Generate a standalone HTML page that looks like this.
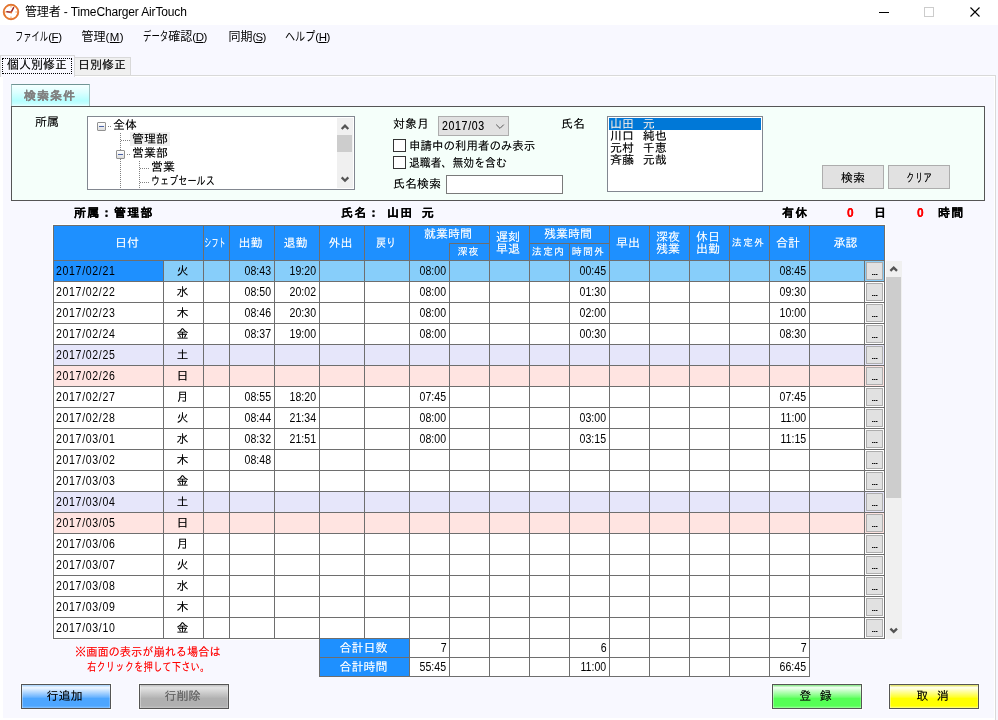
<!DOCTYPE html>
<html lang="ja">
<head>
<meta charset="utf-8">
<title>管理者 - TimeCharger AirTouch</title>
<style>
*{box-sizing:border-box;margin:0;padding:0}
html,body{width:998px;height:720px;overflow:hidden;background:#fff}
body{position:relative;font-family:"Liberation Sans","IPAGothic",sans-serif;font-size:12px;color:#000;line-height:12px}
.abs,#win div,#win span.abs,#win svg{position:absolute}
#win{position:absolute;left:0;top:0;width:998px;height:720px;overflow:hidden;will-change:transform}
.ui{font-family:"Liberation Sans","Noto Sans CJK JP",sans-serif;text-shadow:none}
#titlebar{left:0;top:0;width:998px;height:25px;background:#fff}
#title{left:25px;top:3px;height:18px;line-height:18px;font-size:12px;white-space:nowrap;letter-spacing:-0.15px}
#client{left:0;top:25px;width:998px;height:695px;background:#f8f8ff}
.mi{top:29px;height:16px;line-height:16px;font-size:12px;white-space:nowrap}
.mi u{text-decoration:underline}
/* tabs */
#tabpage{left:-1px;top:75px;width:997px;height:646px;border:1px solid #d9d9d9;background:#fff}
#tabin{left:3px;top:77px;width:991px;height:641px;background:#f8f8ff}
#tab1{left:0;top:55px;width:75px;height:22px;background:#f8f8ff;border:1px solid #d9d9d9;border-bottom:none}
#tab1f{left:2px;top:58px;width:70px;height:16px;border:1px dotted #000}
#tab2{left:74px;top:57px;width:57px;height:18px;background:#f0f0f0;border:1px solid #d9d9d9;border-bottom:none}
.tt{top:59px;height:12px;line-height:12px;font-size:12px;white-space:nowrap}
/* search group */
#gtab{left:11px;top:84px;width:79px;height:22px;border:1px solid #9fc0c0;border-top-color:#6f9494;border-bottom:none;background:linear-gradient(to bottom,#f6ffff 0%,#dcffff 35%,#b4ffff 75%,#c4ffff 88%,#eaffff 100%)}
#gtabt{left:24px;top:90px;width:60px;height:12px;line-height:12px;font-size:12px;letter-spacing:1px;font-weight:bold;color:#808080;white-space:nowrap}
#gpanel{left:11px;top:106px;width:974px;height:95px;background:#f5fffa;border:1px solid #555}
.lb{height:12px;line-height:12px;white-space:nowrap;font-size:12px}
#tree{left:87px;top:116px;width:268px;height:74px;background:#fff;border:1px solid #828790;overflow:hidden}
#list{left:607px;top:116px;width:156px;height:76px;background:#fff;border:1px solid #828790;overflow:hidden}
.btn{background:#e1e1e1;border:1px solid #adadad;text-align:center;font-size:12px}
.cb{width:13px;height:13px;background:#fff;border:1px solid #333}
/* grid */
#gridw{left:52px;top:224px;width:834px;height:416px;background:#fff}
#grid{left:53px;top:225px;width:832px;height:414px;background:#6e6e6e;overflow:hidden}
.hc{background:#1e90ff;color:#fff;border-left:1px solid #6e6e6e;border-top:1px solid #6e6e6e;display:flex;align-items:center;justify-content:center;text-align:center;font-size:12px;line-height:12px;white-space:nowrap;padding-right:3px}
.hc>span{display:block}
.hc.grp{}
.ht{color:#fff;text-align:center;line-height:17px;font-size:12px;white-space:nowrap;padding-right:3px}
.hc.sub{font-size:10px;letter-spacing:1.1px;padding-right:2px}
.hc.sub3{font-size:10px;letter-spacing:1.1px;padding-right:2px}
.hc.kana{padding-right:3px}
.hc.two{line-height:12px}
.r{left:0;width:832px;height:21px}
.c{top:0;height:21px;border-left:1px solid #6e6e6e;border-top:1px solid #6e6e6e;background-color:#fff;background-clip:padding-box;line-height:20px;font-size:12px;white-space:nowrap}
.c.d{padding-left:2.2px}
.c.w{text-align:center;padding-right:2px}
.c.t{text-align:right;padding-right:2.6px}
.c.b i{position:absolute;left:1px;top:1px;width:17px;height:18px;background:#e1e1e1;border:1px solid #adadad;font-style:normal;font-size:7.2px;font-weight:bold;line-height:19.5px;text-align:center;letter-spacing:0;padding-left:0.6px;text-shadow:0 0 0 #000}
.r.sel .c{background-color:#87cefa}
.r.sel .c.d{background-color:#1e90ff}
.r.sat .c{background-color:#e6e6fa}
.r.sun .c{background-color:#ffe4e1}
/* totals */
#tot{left:319px;top:638px;width:491px;height:39px;background:#6e6e6e}
.tl{background:#1e90ff;color:#fff;text-align:center;padding-right:2px;line-height:18px;border-left:1px solid #6e6e6e;border-top:1px solid #6e6e6e;font-size:12px}
.tc{background:#fff;border-left:1px solid #6e6e6e;border-top:1px solid #6e6e6e;text-align:right;padding-right:2.6px;line-height:18px;font-size:12px}
/* scrollbars */
.sbt{background:#f0f0f0}
.sbth{background:#cdcdcd}
/* bottom buttons */
.gb{top:684px;width:90px;height:25px;border:1px solid #555;box-shadow:inset 1px 0 0 0 rgba(255,255,255,.35),inset -1px 0 0 0 rgba(255,255,255,.2),0 0 0 1px rgba(255,255,255,.85);text-align:center;line-height:22px;font-size:12px;white-space:nowrap}
.red{color:#f00}
.b{font-weight:bold;letter-spacing:1.3px}
.sl{display:inline-block;transform:scaleX(1.6);margin:0 2px}
.n{display:inline-block;transform:scaleX(.88);transform-origin:100% 50%}
.nl{display:inline-block;transform:scaleX(.88);transform-origin:0 50%;letter-spacing:.75px}
#win span.n,#win span.nl,#win span.sl{position:static}
.k{display:inline-block;transform-origin:0 50%;position:static}
#win span.k{position:static}
.tsel{background:#f0f0f0}
.vd{width:1px;background-image:linear-gradient(to bottom,#808080 50%,transparent 50%);background-size:1px 2px}
.hd{height:1px;background-image:linear-gradient(to right,#808080 50%,transparent 50%);background-size:2px 1px}
.pm{width:9px;height:9px;border:1px solid #919191;background:linear-gradient(#fff,#ddd);border-radius:1px}
.pm:after{content:"";position:absolute;left:1px;top:3px;width:5px;height:1px;background:#4b63a7}
#win span.lt,#win span.bt,#win span.sp{position:static}
.lt{font-size:11.5px;letter-spacing:-0.4px}
.bt{display:inline-block;margin-right:3px}
.lb,.tt,.c.w,.btn,.gb{text-shadow:0 0 0 rgba(0,0,0,.4)}
.hc,.ht,.tl{text-shadow:0 0 0 rgba(255,255,255,.4)}
.lb.red{text-shadow:0 0 0 rgba(255,0,0,.4)}
.lb.b{text-shadow:0 0 0 #000}
.lb.b.red{text-shadow:0 0 0 #f00}
#gtabt{text-shadow:0 0 0 #808080}
.sx{transform-origin:0 50%}
.hc>span.sc{display:inline-block}
.nm{word-spacing:5.5px;white-space:pre}
.ws{word-spacing:5.2px;white-space:pre}

</style>
</head>
<body>
<div id="win">
<div id="titlebar">
<svg style="left:2px;top:3px" width="18" height="18" viewBox="0 0 18 18"><circle cx="9" cy="9" r="7.1" fill="#fff" stroke="#ea7a30" stroke-width="1.7"/><circle cx="9" cy="9" r="7.8" fill="none" stroke="#cf5a17" stroke-width="0.5"/><path d="M9 3v1.6M9 13.4V15M3 9h1.6M13.4 9H15" stroke="#f2a768" stroke-width="1.1"/><path d="M9.1 9.3L11.6 4.7" stroke="#9c2626" stroke-width="1.5" fill="none" stroke-linecap="round"/><path d="M9.1 9.3L4.9 8.7" stroke="#9c2626" stroke-width="1.5" fill="none" stroke-linecap="round"/><circle cx="9.1" cy="9.4" r="1" fill="#e8742c"/></svg>
<div id="title" class="ui">管理者 - TimeCharger AirTouch</div>
<svg style="left:876px;top:0" width="122" height="25" viewBox="0 0 122 25"><path d="M3 12.5H13" stroke="#000" stroke-width="1"/><rect x="48.5" y="7.5" width="9" height="9" fill="none" stroke="#ccc" stroke-width="1"/><path d="M94.5 7.5L103.5 16.5M103.5 7.5L94.5 16.5" stroke="#000" stroke-width="1.1"/></svg>
</div>
<div id="client"></div>
<div class="mi ui" style="left:15px"><span class="k" style="transform:scaleX(0.69);margin-right:-1.240em">ファイル</span><span class="lt">(<u>F</u>)</span></div>
<div class="mi ui" style="left:81.5px">管理<span class="lt" style="letter-spacing:0.4px">(<u>M</u>)</span></div>
<div class="mi ui" style="left:143px"><span class="k" style="transform:scaleX(0.7);margin-right:-0.900em">データ</span>確認<span class="lt">(<u>D</u>)</span></div>
<div class="mi ui" style="left:228.5px">同期<span class="lt" style="letter-spacing:-0.8px">(<u>S</u>)</span></div>
<div class="mi ui" style="left:285px"><span class="k" style="transform:scaleX(0.84);margin-right:-0.480em">ヘルプ</span><span class="lt">(<u>H</u>)</span></div>
<div id="tabpage"></div>
<div id="tabin"></div>
<div id="tab2"></div>
<div id="tab1"></div>
<div id="tab1f"></div>
<div class="tt" style="left:7px">個人別修正</div>
<div class="tt" style="left:78px">日別修正</div>
<div id="gtab"></div>
<div id="gtabt">検索条件</div>
<div id="gpanel"></div>
<div class="lb" style="left:35px;top:116px">所属</div>
<div id="tree">
<div class="tsel" style="left:42px;top:15px;width:40px;height:14px"></div>
<div class="vd" style="left:32px;top:16px;height:56px"></div>
<div class="vd" style="left:51px;top:44px;height:28px"></div>
<div class="hd" style="left:20px;top:9px;width:4px"></div>
<div class="hd" style="left:33px;top:23px;width:9px"></div>
<div class="hd" style="left:39px;top:37px;width:4px"></div>
<div class="hd" style="left:52px;top:51px;width:9px"></div>
<div class="hd" style="left:52px;top:65px;width:9px"></div>
<div class="pm" style="left:9px;top:5px"></div>
<div class="pm" style="left:28px;top:33px"></div>
<div class="lb" style="left:25px;top:2px">全体</div>
<div class="lb" style="left:44px;top:16px">管理部</div>
<div class="lb" style="left:44px;top:30px">営業部</div>
<div class="lb" style="left:63px;top:44px">営業</div>
<div class="lb sx" style="left:63px;top:58px;transform:scaleX(.76)">ウェブセールス</div>
<div class="sbt" style="left:249px;top:1px;width:16px;height:70px"></div>
<div class="sbth" style="left:249px;top:18px;width:15px;height:17px"></div>
<svg style="left:249px;top:1px" width="16" height="17" viewBox="0 0 16 17"><path d="M4.7 11L8 7.7L11.3 11" fill="none" stroke="#545454" stroke-width="2.3"/></svg>
<svg style="left:249px;top:54px" width="16" height="17" viewBox="0 0 16 17"><path d="M4.7 6.4L8 9.7L11.3 6.4" fill="none" stroke="#545454" stroke-width="2.3"/></svg>
</div>
<div class="lb" style="left:393px;top:118px">対象月</div>
<div class="btn" style="left:438px;top:116px;width:71px;height:20px"></div>
<div class="lb sx" style="left:442.3px;top:120px;transform:scaleX(.88);letter-spacing:.75px">2017/03</div>
<svg style="left:494px;top:122px" width="12" height="8" viewBox="0 0 12 8"><path d="M2.2 2.6L6 6.4L9.8 2.6" fill="none" stroke="#555" stroke-width="1"/></svg>
<div class="cb" style="left:393px;top:139px"></div>
<div class="lb sx" style="left:409px;top:140px;transform:scaleX(.957)">申請中の利用者のみ表示</div>
<div class="cb" style="left:393px;top:156px"></div>
<div class="lb sx" style="left:409px;top:157px;transform:scaleX(.905)">退職者、無効を含む</div>
<div class="lb" style="left:393px;top:178px">氏名検索</div>
<div style="left:446px;top:175px;width:117px;height:19px;background:#fff;border:1px solid #7a7a7a"></div>
<div class="lb" style="left:561px;top:118px">氏名</div>
<div id="list">
<div style="left:1px;top:1px;width:152px;height:12px;background:#0078d7"></div>
<div class="lb nm" style="left:2px;top:1px;color:#fff">山田 元</div>
<div class="lb nm" style="left:2px;top:13px">川口 純也</div>
<div class="lb nm" style="left:2px;top:25px">元村 千恵</div>
<div class="lb nm" style="left:2px;top:37px">斉藤 元哉</div>
</div>
<div class="btn" style="left:822px;top:165px;width:62px;height:24px;line-height:24px">検索</div>
<div class="btn" style="left:888px;top:165px;width:62px;height:24px;line-height:24px"><span class="k" style="transform:scaleX(0.72);margin-right:-0.840em">クリア</span></div>
<div class="lb b" style="left:74px;top:207px">所属：管理部</div>
<div class="lb b" style="left:341px;top:207px">氏名：</div>
<div class="lb b" style="left:387px;top:207px;word-spacing:3.6px">山田 元</div>
<div class="lb b" style="left:782px;top:207px">有休</div>
<div class="lb b red" style="left:847px;top:207px">0</div>
<div class="lb b" style="left:874px;top:207px">日</div>
<div class="lb b red" style="left:917px;top:207px">0</div>
<div class="lb b" style="left:938px;top:207px">時間</div>
<div id="gridw"></div>
<div id="grid">
<div class="hc " style="left:0px;top:0px;width:150px;height:35px"><span>日付</span></div>
<div class="hc kana" style="left:150px;top:0px;width:26px;height:35px"><span style="transform:scaleX(0.6)">シフト</span></div>
<div class="hc " style="left:176px;top:0px;width:45px;height:35px"><span>出勤</span></div>
<div class="hc " style="left:221px;top:0px;width:45px;height:35px"><span>退勤</span></div>
<div class="hc " style="left:266px;top:0px;width:45px;height:35px"><span>外出</span></div>
<div class="hc " style="left:311px;top:0px;width:45px;height:35px"><span style="transform:scaleX(0.84)">戻り</span></div>
<div class="hc grp" style="left:356px;top:0px;width:80px;height:35px"><span></span></div>
<div class="ht" style="left:356px;top:1px;width:81px;height:17px">就業時間</div>
<div class="hc sub" style="left:396px;top:18px;width:40px;height:17px"><span>深夜</span></div>
<div class="hc two" style="left:436px;top:0px;width:40px;height:35px"><span>遅刻<br>早退</span></div>
<div class="hc grp" style="left:476px;top:0px;width:80px;height:35px"><span></span></div>
<div class="ht" style="left:476px;top:1px;width:81px;height:17px">残業時間</div>
<div class="hc sub" style="left:476px;top:18px;width:40px;height:17px"><span>法定内</span></div>
<div class="hc sub" style="left:516px;top:18px;width:40px;height:17px"><span>時間外</span></div>
<div class="hc " style="left:556px;top:0px;width:40px;height:35px"><span>早出</span></div>
<div class="hc two" style="left:596px;top:0px;width:40px;height:35px"><span>深夜<br>残業</span></div>
<div class="hc two" style="left:636px;top:0px;width:40px;height:35px"><span>休日<br>出勤</span></div>
<div class="hc sub3" style="left:676px;top:0px;width:40px;height:35px"><span>法定外</span></div>
<div class="hc " style="left:716px;top:0px;width:40px;height:35px"><span>合計</span></div>
<div class="hc " style="left:756px;top:0px;width:75px;height:35px"><span>承認</span></div>
<div class="r sel" style="top:35px">
<div class="c d" style="left:0px;width:110px"><span class="nl">2017/02/21</span></div>
<div class="c w" style="left:110px;width:40px">火</div>
<div class="c t" style="left:150px;width:26px"></div>
<div class="c t" style="left:176px;width:45px"><span class="n">08:43</span></div>
<div class="c t" style="left:221px;width:45px"><span class="n">19:20</span></div>
<div class="c t" style="left:266px;width:45px"></div>
<div class="c t" style="left:311px;width:45px"></div>
<div class="c t" style="left:356px;width:40px"><span class="n">08:00</span></div>
<div class="c t" style="left:396px;width:40px"></div>
<div class="c t" style="left:436px;width:40px"></div>
<div class="c t" style="left:476px;width:40px"></div>
<div class="c t" style="left:516px;width:40px"><span class="n">00:45</span></div>
<div class="c t" style="left:556px;width:40px"></div>
<div class="c t" style="left:596px;width:40px"></div>
<div class="c t" style="left:636px;width:40px"></div>
<div class="c t" style="left:676px;width:40px"></div>
<div class="c t" style="left:716px;width:40px"><span class="n">08:45</span></div>
<div class="c t" style="left:756px;width:55px"></div>
<div class="c b" style="left:811px;width:20px"><i>...</i></div>
</div>
<div class="r " style="top:56px">
<div class="c d" style="left:0px;width:110px"><span class="nl">2017/02/22</span></div>
<div class="c w" style="left:110px;width:40px">水</div>
<div class="c t" style="left:150px;width:26px"></div>
<div class="c t" style="left:176px;width:45px"><span class="n">08:50</span></div>
<div class="c t" style="left:221px;width:45px"><span class="n">20:02</span></div>
<div class="c t" style="left:266px;width:45px"></div>
<div class="c t" style="left:311px;width:45px"></div>
<div class="c t" style="left:356px;width:40px"><span class="n">08:00</span></div>
<div class="c t" style="left:396px;width:40px"></div>
<div class="c t" style="left:436px;width:40px"></div>
<div class="c t" style="left:476px;width:40px"></div>
<div class="c t" style="left:516px;width:40px"><span class="n">01:30</span></div>
<div class="c t" style="left:556px;width:40px"></div>
<div class="c t" style="left:596px;width:40px"></div>
<div class="c t" style="left:636px;width:40px"></div>
<div class="c t" style="left:676px;width:40px"></div>
<div class="c t" style="left:716px;width:40px"><span class="n">09:30</span></div>
<div class="c t" style="left:756px;width:55px"></div>
<div class="c b" style="left:811px;width:20px"><i>...</i></div>
</div>
<div class="r " style="top:77px">
<div class="c d" style="left:0px;width:110px"><span class="nl">2017/02/23</span></div>
<div class="c w" style="left:110px;width:40px">木</div>
<div class="c t" style="left:150px;width:26px"></div>
<div class="c t" style="left:176px;width:45px"><span class="n">08:46</span></div>
<div class="c t" style="left:221px;width:45px"><span class="n">20:30</span></div>
<div class="c t" style="left:266px;width:45px"></div>
<div class="c t" style="left:311px;width:45px"></div>
<div class="c t" style="left:356px;width:40px"><span class="n">08:00</span></div>
<div class="c t" style="left:396px;width:40px"></div>
<div class="c t" style="left:436px;width:40px"></div>
<div class="c t" style="left:476px;width:40px"></div>
<div class="c t" style="left:516px;width:40px"><span class="n">02:00</span></div>
<div class="c t" style="left:556px;width:40px"></div>
<div class="c t" style="left:596px;width:40px"></div>
<div class="c t" style="left:636px;width:40px"></div>
<div class="c t" style="left:676px;width:40px"></div>
<div class="c t" style="left:716px;width:40px"><span class="n">10:00</span></div>
<div class="c t" style="left:756px;width:55px"></div>
<div class="c b" style="left:811px;width:20px"><i>...</i></div>
</div>
<div class="r " style="top:98px">
<div class="c d" style="left:0px;width:110px"><span class="nl">2017/02/24</span></div>
<div class="c w" style="left:110px;width:40px">金</div>
<div class="c t" style="left:150px;width:26px"></div>
<div class="c t" style="left:176px;width:45px"><span class="n">08:37</span></div>
<div class="c t" style="left:221px;width:45px"><span class="n">19:00</span></div>
<div class="c t" style="left:266px;width:45px"></div>
<div class="c t" style="left:311px;width:45px"></div>
<div class="c t" style="left:356px;width:40px"><span class="n">08:00</span></div>
<div class="c t" style="left:396px;width:40px"></div>
<div class="c t" style="left:436px;width:40px"></div>
<div class="c t" style="left:476px;width:40px"></div>
<div class="c t" style="left:516px;width:40px"><span class="n">00:30</span></div>
<div class="c t" style="left:556px;width:40px"></div>
<div class="c t" style="left:596px;width:40px"></div>
<div class="c t" style="left:636px;width:40px"></div>
<div class="c t" style="left:676px;width:40px"></div>
<div class="c t" style="left:716px;width:40px"><span class="n">08:30</span></div>
<div class="c t" style="left:756px;width:55px"></div>
<div class="c b" style="left:811px;width:20px"><i>...</i></div>
</div>
<div class="r sat" style="top:119px">
<div class="c d" style="left:0px;width:110px"><span class="nl">2017/02/25</span></div>
<div class="c w" style="left:110px;width:40px">土</div>
<div class="c t" style="left:150px;width:26px"></div>
<div class="c t" style="left:176px;width:45px"></div>
<div class="c t" style="left:221px;width:45px"></div>
<div class="c t" style="left:266px;width:45px"></div>
<div class="c t" style="left:311px;width:45px"></div>
<div class="c t" style="left:356px;width:40px"></div>
<div class="c t" style="left:396px;width:40px"></div>
<div class="c t" style="left:436px;width:40px"></div>
<div class="c t" style="left:476px;width:40px"></div>
<div class="c t" style="left:516px;width:40px"></div>
<div class="c t" style="left:556px;width:40px"></div>
<div class="c t" style="left:596px;width:40px"></div>
<div class="c t" style="left:636px;width:40px"></div>
<div class="c t" style="left:676px;width:40px"></div>
<div class="c t" style="left:716px;width:40px"></div>
<div class="c t" style="left:756px;width:55px"></div>
<div class="c b" style="left:811px;width:20px"><i>...</i></div>
</div>
<div class="r sun" style="top:140px">
<div class="c d" style="left:0px;width:110px"><span class="nl">2017/02/26</span></div>
<div class="c w" style="left:110px;width:40px">日</div>
<div class="c t" style="left:150px;width:26px"></div>
<div class="c t" style="left:176px;width:45px"></div>
<div class="c t" style="left:221px;width:45px"></div>
<div class="c t" style="left:266px;width:45px"></div>
<div class="c t" style="left:311px;width:45px"></div>
<div class="c t" style="left:356px;width:40px"></div>
<div class="c t" style="left:396px;width:40px"></div>
<div class="c t" style="left:436px;width:40px"></div>
<div class="c t" style="left:476px;width:40px"></div>
<div class="c t" style="left:516px;width:40px"></div>
<div class="c t" style="left:556px;width:40px"></div>
<div class="c t" style="left:596px;width:40px"></div>
<div class="c t" style="left:636px;width:40px"></div>
<div class="c t" style="left:676px;width:40px"></div>
<div class="c t" style="left:716px;width:40px"></div>
<div class="c t" style="left:756px;width:55px"></div>
<div class="c b" style="left:811px;width:20px"><i>...</i></div>
</div>
<div class="r " style="top:161px">
<div class="c d" style="left:0px;width:110px"><span class="nl">2017/02/27</span></div>
<div class="c w" style="left:110px;width:40px">月</div>
<div class="c t" style="left:150px;width:26px"></div>
<div class="c t" style="left:176px;width:45px"><span class="n">08:55</span></div>
<div class="c t" style="left:221px;width:45px"><span class="n">18:20</span></div>
<div class="c t" style="left:266px;width:45px"></div>
<div class="c t" style="left:311px;width:45px"></div>
<div class="c t" style="left:356px;width:40px"><span class="n">07:45</span></div>
<div class="c t" style="left:396px;width:40px"></div>
<div class="c t" style="left:436px;width:40px"></div>
<div class="c t" style="left:476px;width:40px"></div>
<div class="c t" style="left:516px;width:40px"></div>
<div class="c t" style="left:556px;width:40px"></div>
<div class="c t" style="left:596px;width:40px"></div>
<div class="c t" style="left:636px;width:40px"></div>
<div class="c t" style="left:676px;width:40px"></div>
<div class="c t" style="left:716px;width:40px"><span class="n">07:45</span></div>
<div class="c t" style="left:756px;width:55px"></div>
<div class="c b" style="left:811px;width:20px"><i>...</i></div>
</div>
<div class="r " style="top:182px">
<div class="c d" style="left:0px;width:110px"><span class="nl">2017/02/28</span></div>
<div class="c w" style="left:110px;width:40px">火</div>
<div class="c t" style="left:150px;width:26px"></div>
<div class="c t" style="left:176px;width:45px"><span class="n">08:44</span></div>
<div class="c t" style="left:221px;width:45px"><span class="n">21:34</span></div>
<div class="c t" style="left:266px;width:45px"></div>
<div class="c t" style="left:311px;width:45px"></div>
<div class="c t" style="left:356px;width:40px"><span class="n">08:00</span></div>
<div class="c t" style="left:396px;width:40px"></div>
<div class="c t" style="left:436px;width:40px"></div>
<div class="c t" style="left:476px;width:40px"></div>
<div class="c t" style="left:516px;width:40px"><span class="n">03:00</span></div>
<div class="c t" style="left:556px;width:40px"></div>
<div class="c t" style="left:596px;width:40px"></div>
<div class="c t" style="left:636px;width:40px"></div>
<div class="c t" style="left:676px;width:40px"></div>
<div class="c t" style="left:716px;width:40px"><span class="n">11:00</span></div>
<div class="c t" style="left:756px;width:55px"></div>
<div class="c b" style="left:811px;width:20px"><i>...</i></div>
</div>
<div class="r " style="top:203px">
<div class="c d" style="left:0px;width:110px"><span class="nl">2017/03/01</span></div>
<div class="c w" style="left:110px;width:40px">水</div>
<div class="c t" style="left:150px;width:26px"></div>
<div class="c t" style="left:176px;width:45px"><span class="n">08:32</span></div>
<div class="c t" style="left:221px;width:45px"><span class="n">21:51</span></div>
<div class="c t" style="left:266px;width:45px"></div>
<div class="c t" style="left:311px;width:45px"></div>
<div class="c t" style="left:356px;width:40px"><span class="n">08:00</span></div>
<div class="c t" style="left:396px;width:40px"></div>
<div class="c t" style="left:436px;width:40px"></div>
<div class="c t" style="left:476px;width:40px"></div>
<div class="c t" style="left:516px;width:40px"><span class="n">03:15</span></div>
<div class="c t" style="left:556px;width:40px"></div>
<div class="c t" style="left:596px;width:40px"></div>
<div class="c t" style="left:636px;width:40px"></div>
<div class="c t" style="left:676px;width:40px"></div>
<div class="c t" style="left:716px;width:40px"><span class="n">11:15</span></div>
<div class="c t" style="left:756px;width:55px"></div>
<div class="c b" style="left:811px;width:20px"><i>...</i></div>
</div>
<div class="r " style="top:224px">
<div class="c d" style="left:0px;width:110px"><span class="nl">2017/03/02</span></div>
<div class="c w" style="left:110px;width:40px">木</div>
<div class="c t" style="left:150px;width:26px"></div>
<div class="c t" style="left:176px;width:45px"><span class="n">08:48</span></div>
<div class="c t" style="left:221px;width:45px"></div>
<div class="c t" style="left:266px;width:45px"></div>
<div class="c t" style="left:311px;width:45px"></div>
<div class="c t" style="left:356px;width:40px"></div>
<div class="c t" style="left:396px;width:40px"></div>
<div class="c t" style="left:436px;width:40px"></div>
<div class="c t" style="left:476px;width:40px"></div>
<div class="c t" style="left:516px;width:40px"></div>
<div class="c t" style="left:556px;width:40px"></div>
<div class="c t" style="left:596px;width:40px"></div>
<div class="c t" style="left:636px;width:40px"></div>
<div class="c t" style="left:676px;width:40px"></div>
<div class="c t" style="left:716px;width:40px"></div>
<div class="c t" style="left:756px;width:55px"></div>
<div class="c b" style="left:811px;width:20px"><i>...</i></div>
</div>
<div class="r " style="top:245px">
<div class="c d" style="left:0px;width:110px"><span class="nl">2017/03/03</span></div>
<div class="c w" style="left:110px;width:40px">金</div>
<div class="c t" style="left:150px;width:26px"></div>
<div class="c t" style="left:176px;width:45px"></div>
<div class="c t" style="left:221px;width:45px"></div>
<div class="c t" style="left:266px;width:45px"></div>
<div class="c t" style="left:311px;width:45px"></div>
<div class="c t" style="left:356px;width:40px"></div>
<div class="c t" style="left:396px;width:40px"></div>
<div class="c t" style="left:436px;width:40px"></div>
<div class="c t" style="left:476px;width:40px"></div>
<div class="c t" style="left:516px;width:40px"></div>
<div class="c t" style="left:556px;width:40px"></div>
<div class="c t" style="left:596px;width:40px"></div>
<div class="c t" style="left:636px;width:40px"></div>
<div class="c t" style="left:676px;width:40px"></div>
<div class="c t" style="left:716px;width:40px"></div>
<div class="c t" style="left:756px;width:55px"></div>
<div class="c b" style="left:811px;width:20px"><i>...</i></div>
</div>
<div class="r sat" style="top:266px">
<div class="c d" style="left:0px;width:110px"><span class="nl">2017/03/04</span></div>
<div class="c w" style="left:110px;width:40px">土</div>
<div class="c t" style="left:150px;width:26px"></div>
<div class="c t" style="left:176px;width:45px"></div>
<div class="c t" style="left:221px;width:45px"></div>
<div class="c t" style="left:266px;width:45px"></div>
<div class="c t" style="left:311px;width:45px"></div>
<div class="c t" style="left:356px;width:40px"></div>
<div class="c t" style="left:396px;width:40px"></div>
<div class="c t" style="left:436px;width:40px"></div>
<div class="c t" style="left:476px;width:40px"></div>
<div class="c t" style="left:516px;width:40px"></div>
<div class="c t" style="left:556px;width:40px"></div>
<div class="c t" style="left:596px;width:40px"></div>
<div class="c t" style="left:636px;width:40px"></div>
<div class="c t" style="left:676px;width:40px"></div>
<div class="c t" style="left:716px;width:40px"></div>
<div class="c t" style="left:756px;width:55px"></div>
<div class="c b" style="left:811px;width:20px"><i>...</i></div>
</div>
<div class="r sun" style="top:287px">
<div class="c d" style="left:0px;width:110px"><span class="nl">2017/03/05</span></div>
<div class="c w" style="left:110px;width:40px">日</div>
<div class="c t" style="left:150px;width:26px"></div>
<div class="c t" style="left:176px;width:45px"></div>
<div class="c t" style="left:221px;width:45px"></div>
<div class="c t" style="left:266px;width:45px"></div>
<div class="c t" style="left:311px;width:45px"></div>
<div class="c t" style="left:356px;width:40px"></div>
<div class="c t" style="left:396px;width:40px"></div>
<div class="c t" style="left:436px;width:40px"></div>
<div class="c t" style="left:476px;width:40px"></div>
<div class="c t" style="left:516px;width:40px"></div>
<div class="c t" style="left:556px;width:40px"></div>
<div class="c t" style="left:596px;width:40px"></div>
<div class="c t" style="left:636px;width:40px"></div>
<div class="c t" style="left:676px;width:40px"></div>
<div class="c t" style="left:716px;width:40px"></div>
<div class="c t" style="left:756px;width:55px"></div>
<div class="c b" style="left:811px;width:20px"><i>...</i></div>
</div>
<div class="r " style="top:308px">
<div class="c d" style="left:0px;width:110px"><span class="nl">2017/03/06</span></div>
<div class="c w" style="left:110px;width:40px">月</div>
<div class="c t" style="left:150px;width:26px"></div>
<div class="c t" style="left:176px;width:45px"></div>
<div class="c t" style="left:221px;width:45px"></div>
<div class="c t" style="left:266px;width:45px"></div>
<div class="c t" style="left:311px;width:45px"></div>
<div class="c t" style="left:356px;width:40px"></div>
<div class="c t" style="left:396px;width:40px"></div>
<div class="c t" style="left:436px;width:40px"></div>
<div class="c t" style="left:476px;width:40px"></div>
<div class="c t" style="left:516px;width:40px"></div>
<div class="c t" style="left:556px;width:40px"></div>
<div class="c t" style="left:596px;width:40px"></div>
<div class="c t" style="left:636px;width:40px"></div>
<div class="c t" style="left:676px;width:40px"></div>
<div class="c t" style="left:716px;width:40px"></div>
<div class="c t" style="left:756px;width:55px"></div>
<div class="c b" style="left:811px;width:20px"><i>...</i></div>
</div>
<div class="r " style="top:329px">
<div class="c d" style="left:0px;width:110px"><span class="nl">2017/03/07</span></div>
<div class="c w" style="left:110px;width:40px">火</div>
<div class="c t" style="left:150px;width:26px"></div>
<div class="c t" style="left:176px;width:45px"></div>
<div class="c t" style="left:221px;width:45px"></div>
<div class="c t" style="left:266px;width:45px"></div>
<div class="c t" style="left:311px;width:45px"></div>
<div class="c t" style="left:356px;width:40px"></div>
<div class="c t" style="left:396px;width:40px"></div>
<div class="c t" style="left:436px;width:40px"></div>
<div class="c t" style="left:476px;width:40px"></div>
<div class="c t" style="left:516px;width:40px"></div>
<div class="c t" style="left:556px;width:40px"></div>
<div class="c t" style="left:596px;width:40px"></div>
<div class="c t" style="left:636px;width:40px"></div>
<div class="c t" style="left:676px;width:40px"></div>
<div class="c t" style="left:716px;width:40px"></div>
<div class="c t" style="left:756px;width:55px"></div>
<div class="c b" style="left:811px;width:20px"><i>...</i></div>
</div>
<div class="r " style="top:350px">
<div class="c d" style="left:0px;width:110px"><span class="nl">2017/03/08</span></div>
<div class="c w" style="left:110px;width:40px">水</div>
<div class="c t" style="left:150px;width:26px"></div>
<div class="c t" style="left:176px;width:45px"></div>
<div class="c t" style="left:221px;width:45px"></div>
<div class="c t" style="left:266px;width:45px"></div>
<div class="c t" style="left:311px;width:45px"></div>
<div class="c t" style="left:356px;width:40px"></div>
<div class="c t" style="left:396px;width:40px"></div>
<div class="c t" style="left:436px;width:40px"></div>
<div class="c t" style="left:476px;width:40px"></div>
<div class="c t" style="left:516px;width:40px"></div>
<div class="c t" style="left:556px;width:40px"></div>
<div class="c t" style="left:596px;width:40px"></div>
<div class="c t" style="left:636px;width:40px"></div>
<div class="c t" style="left:676px;width:40px"></div>
<div class="c t" style="left:716px;width:40px"></div>
<div class="c t" style="left:756px;width:55px"></div>
<div class="c b" style="left:811px;width:20px"><i>...</i></div>
</div>
<div class="r " style="top:371px">
<div class="c d" style="left:0px;width:110px"><span class="nl">2017/03/09</span></div>
<div class="c w" style="left:110px;width:40px">木</div>
<div class="c t" style="left:150px;width:26px"></div>
<div class="c t" style="left:176px;width:45px"></div>
<div class="c t" style="left:221px;width:45px"></div>
<div class="c t" style="left:266px;width:45px"></div>
<div class="c t" style="left:311px;width:45px"></div>
<div class="c t" style="left:356px;width:40px"></div>
<div class="c t" style="left:396px;width:40px"></div>
<div class="c t" style="left:436px;width:40px"></div>
<div class="c t" style="left:476px;width:40px"></div>
<div class="c t" style="left:516px;width:40px"></div>
<div class="c t" style="left:556px;width:40px"></div>
<div class="c t" style="left:596px;width:40px"></div>
<div class="c t" style="left:636px;width:40px"></div>
<div class="c t" style="left:676px;width:40px"></div>
<div class="c t" style="left:716px;width:40px"></div>
<div class="c t" style="left:756px;width:55px"></div>
<div class="c b" style="left:811px;width:20px"><i>...</i></div>
</div>
<div class="r " style="top:392px">
<div class="c d" style="left:0px;width:110px"><span class="nl">2017/03/10</span></div>
<div class="c w" style="left:110px;width:40px">金</div>
<div class="c t" style="left:150px;width:26px"></div>
<div class="c t" style="left:176px;width:45px"></div>
<div class="c t" style="left:221px;width:45px"></div>
<div class="c t" style="left:266px;width:45px"></div>
<div class="c t" style="left:311px;width:45px"></div>
<div class="c t" style="left:356px;width:40px"></div>
<div class="c t" style="left:396px;width:40px"></div>
<div class="c t" style="left:436px;width:40px"></div>
<div class="c t" style="left:476px;width:40px"></div>
<div class="c t" style="left:516px;width:40px"></div>
<div class="c t" style="left:556px;width:40px"></div>
<div class="c t" style="left:596px;width:40px"></div>
<div class="c t" style="left:636px;width:40px"></div>
<div class="c t" style="left:676px;width:40px"></div>
<div class="c t" style="left:716px;width:40px"></div>
<div class="c t" style="left:756px;width:55px"></div>
<div class="c b" style="left:811px;width:20px"><i>...</i></div>
</div>
</div>
<div id="tot">
<div class="tl" style="left:0;top:0px;width:90px;height:19px">合計日数</div>
<div class="tc" style="left:90px;top:0px;width:40px;height:19px"><span class="n">7</span></div>
<div class="tc" style="left:130px;top:0px;width:40px;height:19px"></div>
<div class="tc" style="left:170px;top:0px;width:40px;height:19px"></div>
<div class="tc" style="left:210px;top:0px;width:40px;height:19px"></div>
<div class="tc" style="left:250px;top:0px;width:40px;height:19px"><span class="n">6</span></div>
<div class="tc" style="left:290px;top:0px;width:40px;height:19px"></div>
<div class="tc" style="left:330px;top:0px;width:40px;height:19px"></div>
<div class="tc" style="left:370px;top:0px;width:40px;height:19px"></div>
<div class="tc" style="left:410px;top:0px;width:40px;height:19px"></div>
<div class="tc" style="left:450px;top:0px;width:40px;height:19px"><span class="n">7</span></div>
<div class="tl" style="left:0;top:19px;width:90px;height:19px">合計時間</div>
<div class="tc" style="left:90px;top:19px;width:40px;height:19px"><span class="n">55:45</span></div>
<div class="tc" style="left:130px;top:19px;width:40px;height:19px"></div>
<div class="tc" style="left:170px;top:19px;width:40px;height:19px"></div>
<div class="tc" style="left:210px;top:19px;width:40px;height:19px"></div>
<div class="tc" style="left:250px;top:19px;width:40px;height:19px"><span class="n">11:00</span></div>
<div class="tc" style="left:290px;top:19px;width:40px;height:19px"></div>
<div class="tc" style="left:330px;top:19px;width:40px;height:19px"></div>
<div class="tc" style="left:370px;top:19px;width:40px;height:19px"></div>
<div class="tc" style="left:410px;top:19px;width:40px;height:19px"></div>
<div class="tc" style="left:450px;top:19px;width:40px;height:19px"><span class="n">66:45</span></div>
</div>
<div class="sbt" style="left:886px;top:261px;width:16px;height:378px"></div>
<div class="sbth" style="left:886px;top:277px;width:15px;height:221px"></div>
<svg style="left:886px;top:261px" width="16" height="16" viewBox="0 0 16 16"><path d="M4.4 9.9L7.7 6.6L11 9.9" fill="none" stroke="#545454" stroke-width="2.3"/></svg>
<svg style="left:886px;top:623px" width="16" height="16" viewBox="0 0 16 16"><path d="M4.4 5.6L7.7 8.9L11 5.6" fill="none" stroke="#545454" stroke-width="2.3"/></svg>
<div class="lb red sx" style="left:75px;top:646px;transform:scaleX(.934)">※画面の表示が崩れる場合は</div>
<div class="lb red sx" style="left:86.5px;top:661px;transform:scaleX(.785)">右クリックを押して下さい。</div>
<div class="gb" style="left:21px;background:linear-gradient(to bottom,#b4d9fc 0,#b4d9fc 1px,#ecf5ff 2px,#ecf5ff 3px,#6db5ff 12px,#4da6ff 13.5px,#4da6ff 21px,#8cc5ff 23px)"><span class="bt">行追加</span></div>
<div class="gb" style="left:139px;color:#666;background:linear-gradient(to bottom,#c6c6c6 0,#c6c6c6 1px,#e2e2e2 2px,#e2e2e2 3px,#b8b8b8 12px,#b0b0b0 13.5px,#b0b0b0 21px,#c6c6c6 23px)"><span class="bt">行削除</span></div>
<div class="gb" style="left:772px;background:linear-gradient(to bottom,#96ea96 0,#96ea96 1px,#ecffec 2px,#ecffec 3px,#74ff74 12px,#55ff55 13.5px,#55ff55 21px,#a2ffa2 23px)"><span class="bt ws">登 録</span></div>
<div class="gb" style="left:889px;background:linear-gradient(to bottom,#e4e474 0,#e4e474 1px,#ffffe8 2px,#ffffe8 3px,#ffff30 12px,#ffff00 13.5px,#ffff00 21px,#ffff90 23px)"><span class="bt ws">取 消</span></div>
</div>
</body>
</html>
